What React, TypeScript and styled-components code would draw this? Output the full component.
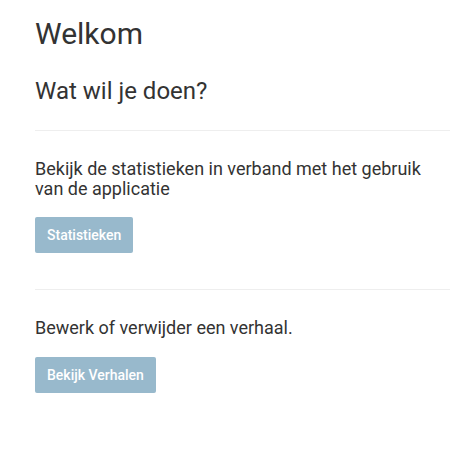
import React from "react";
import styled, { createGlobalStyle } from "styled-components";

const Global = createGlobalStyle`
  html, body { margin: 0; padding: 0; background: #fff; }
  body { font-family: Roboto, "Liberation Sans", sans-serif; color: #333; }
  * { box-sizing: border-box; }
`;

const Page = styled.main`
  padding: 16px 0 40px 35px;
  display: flex;
  flex-direction: column;
`;

const Title = styled.h1`
  margin: 0;
  font-size: 30px;
  line-height: 36px;
  font-weight: 400;
`;

const Subtitle = styled.h2`
  margin: 25px 0 0;
  font-size: 24px;
  line-height: 28.8px;
  font-weight: 400;
`;

const Divider = styled.hr<{ $top: number }>`
  margin: ${(p) => p.$top}px 0 0;
  border: 0;
  border-top: 1px solid #eeeeee;
  width: 100%;
`;

const Section = styled.section`
  display: flex;
  flex-direction: column;
  align-items: flex-start;
  gap: 19px;
  padding-top: 28px;
  padding-right: 20px;
`;

const Text = styled.p`
  margin: 0;
  font-size: 18px;
  line-height: 19.8px;
`;

const Button = styled.button`
  height: 36px;
  padding: 0 12px;
  border: 0;
  border-radius: 2px;
  background: #98b9cc;
  color: #fff;
  font-family: Roboto, "Liberation Sans", sans-serif;
  font-size: 14px;
  font-weight: 500;
  cursor: pointer;
`;

export default function App() {
  return (
    <Page>
      <Global />
      <Title>Welkom</Title>
      <Subtitle>Wat wil je doen?</Subtitle>
      <Divider $top={24} />
      <Section>
        <Text>Bekijk de statistieken in verband met het gebruik van de applicatie</Text>
        <Button>Statistieken</Button>
      </Section>
      <Divider $top={36} />
      <Section>
        <Text>Bewerk of verwijder een verhaal.</Text>
        <Button>Bekijk Verhalen</Button>
      </Section>
    </Page>
  );
}
